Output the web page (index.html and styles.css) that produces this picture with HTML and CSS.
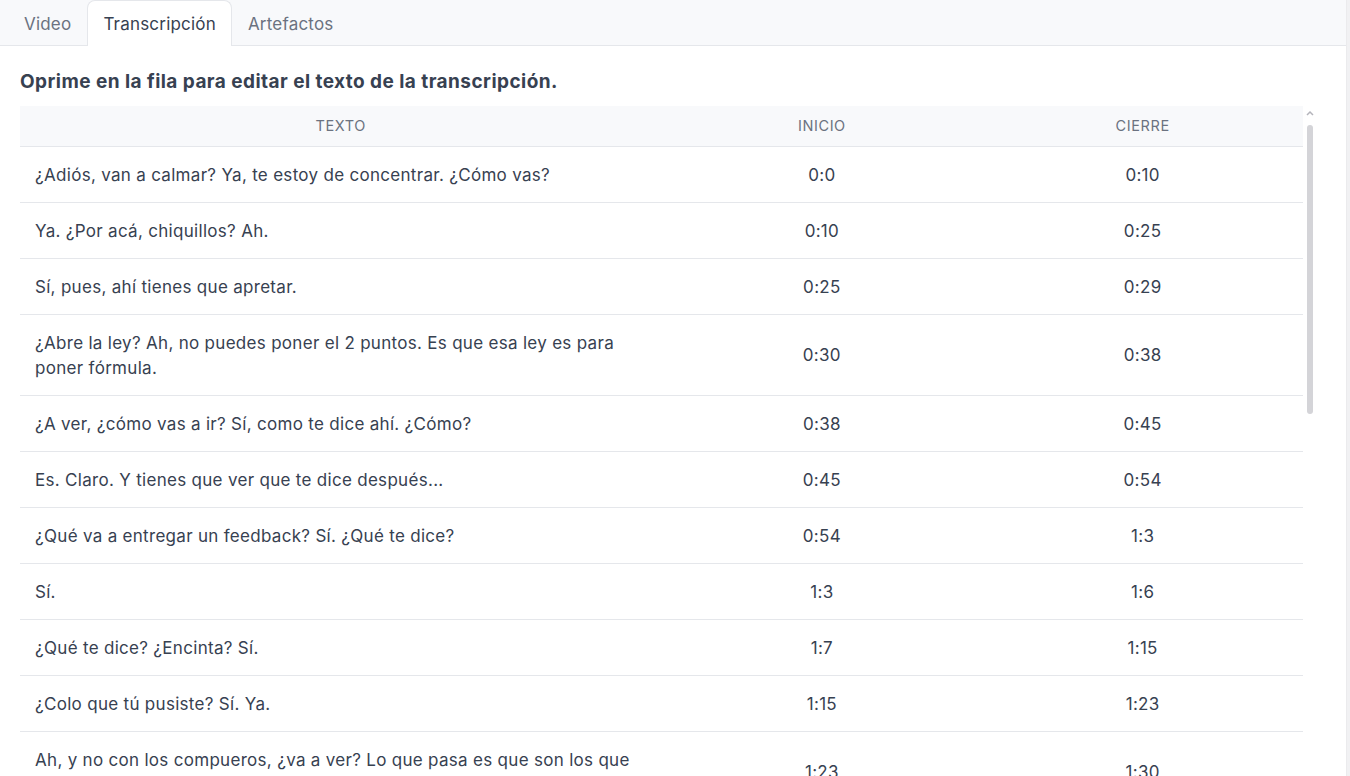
FILE: index.html
```html
<!DOCTYPE html>
<html lang="es">
<head>
<meta charset="utf-8">
<title>Transcripción</title>
<link rel="stylesheet" href="styles.css">
</head>
<body>
<div class="app">
  <div class="panel">
    <nav class="tabs">
      <div class="tab">Video</div>
      <div class="tab active">Transcripción</div>
      <div class="tab">Artefactos</div>
    </nav>
    <section class="content">
      <h2 class="title">Oprime en la fila para editar el texto de la transcripción.</h2>
      <div class="tablewrap">
        <div class="scroller">
          <table class="grid">
            <colgroup><col class="c-text"><col class="c-time"><col class="c-time"></colgroup>
            <thead>
              <tr><th>Texto</th><th>Inicio</th><th>Cierre</th></tr>
            </thead>
            <tbody>
              <tr><td class="txt">¿Adiós, van a calmar? Ya, te estoy de concentrar. ¿Cómo vas?</td><td>0:0</td><td>0:10</td></tr>
              <tr><td class="txt">Ya. ¿Por acá, chiquillos? Ah.</td><td>0:10</td><td>0:25</td></tr>
              <tr><td class="txt">Sí, pues, ahí tienes que apretar.</td><td>0:25</td><td>0:29</td></tr>
              <tr><td class="txt">¿Abre la ley? Ah, no puedes poner el 2 puntos. Es que esa ley es para poner fórmula.</td><td>0:30</td><td>0:38</td></tr>
              <tr><td class="txt">¿A ver, ¿cómo vas a ir? Sí, como te dice ahí. ¿Cómo?</td><td>0:38</td><td>0:45</td></tr>
              <tr><td class="txt">Es. Claro. Y tienes que ver que te dice después...</td><td>0:45</td><td>0:54</td></tr>
              <tr><td class="txt">¿Qué va a entregar un feedback? Sí. ¿Qué te dice?</td><td>0:54</td><td>1:3</td></tr>
              <tr><td class="txt">Sí.</td><td>1:3</td><td>1:6</td></tr>
              <tr><td class="txt">¿Qué te dice? ¿Encinta? Sí.</td><td>1:7</td><td>1:15</td></tr>
              <tr><td class="txt">¿Colo que tú pusiste? Sí. Ya.</td><td>1:15</td><td>1:23</td></tr>
              <tr><td class="txt">Ah, y no con los compueros, ¿va a ver? Lo que pasa es que son los que tienen que poner la fórmula.</td><td>1:23</td><td>1:30</td></tr>
              <tr><td class="txt">Ya, ¿y ahora qué sigue?</td><td>1:30</td><td>1:36</td></tr>
            </tbody>
          </table>
        </div>
        <div class="vbar">
          <svg class="vbar-arrow" width="8" height="6" viewBox="0 0 8 6"><path d="M1 5 L4 2 L7 5" fill="none" stroke="#b4b4bb" stroke-width="1.5"/></svg>
          <div class="vbar-thumb"></div>
        </div>
      </div>
    </section>
  </div>
  <div class="edge"></div>
</div>
</body>
</html>
```
FILE: styles.css
```css
* { box-sizing: border-box; }
html, body { margin: 0; padding: 0; height: 100%; }
body {
  font-family: Inter, "Noto Sans", sans-serif;
  color: #374151;
  background: #ffffff;
  overflow: hidden;
}
.app {
  display: flex;
  height: 100vh;
}
.panel {
  flex: 1;
  min-width: 0;
  display: flex;
  flex-direction: column;
}
.edge {
  width: 4px;
  background: #f1f1f3;
  border-left: 1px solid #ebebed;
}
.tabs {
  display: flex;
  align-items: flex-end;
  height: 46px;
  padding-left: 8px;
  background: #f8f9fb;
  border-bottom: 1px solid #e5e7eb;
}
.tab {
  height: 45px;
  padding: 2px 15px 0 15px;
  display: flex;
  align-items: center;
  font-size: 17px;
  letter-spacing: 0.2px;
  color: #6b7280;
  border: 1px solid transparent;
  border-bottom: none;
  border-radius: 8px 8px 0 0;
}
.tab.active {
  height: 46px;
  margin-bottom: -1px;
  padding-bottom: 1px;
  background: #ffffff;
  border-color: #e5e7eb;
  color: #374151;
}
.content {
  flex: 1;
  min-height: 0;
  display: flex;
  flex-direction: column;
  padding: 22px 0 0 20px;
}
.title {
  margin: 0 0 10px 0;
  font-size: 19px;
  line-height: 28px;
  letter-spacing: 0.45px;
  font-weight: 700;
  color: #374151;
}
.tablewrap {
  flex: 1;
  min-height: 0;
  display: flex;
  margin-right: 29px;
}
.scroller {
  flex: 1;
  min-width: 0;
  overflow: hidden;
}
.vbar {
  width: 14px;
  display: flex;
  flex-direction: column;
  align-items: center;
  padding-top: 4px;
}
.vbar-arrow {
  display: block;
}
.vbar-thumb {
  margin-top: 9px;
  width: 6px;
  height: 289px;
  background: #d4d4d8;
  border-radius: 4px;
}
.grid {
  width: 100%;
  border-collapse: collapse;
  table-layout: fixed;
}
.c-text { width: 50%; }
.c-time { width: 25%; }
.grid th {
  height: 40px;
  background: #f8f9fb;
  font-size: 14.5px;
  font-weight: 400;
  text-transform: uppercase;
  letter-spacing: 0.6px;
  color: #6b7280;
  text-align: center;
  border-bottom: 1px solid #e5e7eb;
  padding: 0 0 1px 0;
}
.grid td {
  padding: 16px 16px 14px 16px;
  font-size: 17px;
  line-height: 25px;
  letter-spacing: 0.3px;
  color: #374151;
  text-align: center;
  border-bottom: 1px solid #e5e7eb;
}
.grid td.txt {
  text-align: left;
  padding-left: 15px;
}
```
